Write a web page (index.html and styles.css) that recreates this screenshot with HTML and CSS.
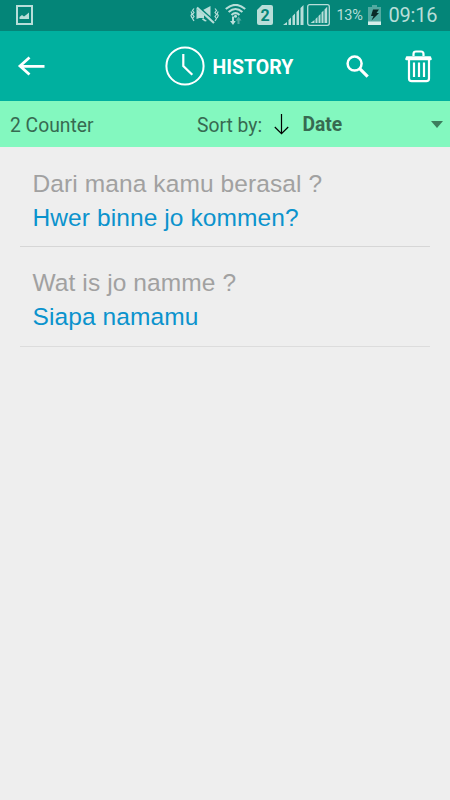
FILE: index.html
```html
<!DOCTYPE html>
<html lang="id">
<head>
<meta charset="utf-8">
<title>History</title>
<link rel="stylesheet" href="styles.css">
</head>
<body>
<div class="status">
  <svg class="shot" width="17" height="20" viewBox="0 0 17 20"><path d="M1 1h15v18H1z" fill="none" stroke="currentColor" stroke-width="2"/><path d="M3.500 14v-2l2.500-2 2 1.500 2-1.500 3-2.500V14z" fill="currentColor"/></svg>
  <svg class="mute" width="29" height="20" viewBox="0 0 29 20"><path d="M6.500 3.500L14 10v3H9.500l-3 1z" fill="currentColor"/><path d="M13 5l7.500-4v14zM13 13l4 3-2 .5-3-2z" fill="currentColor"/><path d="M8.500 1.500l16.500 15" stroke="#048578" stroke-width="1.500"/><path d="M7 2.500l17 15.500" stroke="currentColor" stroke-width="2.200"/><path d="M4 3.500L2.500 5.500 4 7.500 2.500 9.500 4 11.500 2.500 13.500 4 16M1 6.500l1 2-1 2 1 2.500M25 3.500L26.500 5.500 25 7.500 26.500 9.500 25 11.500 26.500 13.500 25 16M28.200 6.500l-1 2 1 2-1 2.500" fill="none" stroke="currentColor" stroke-width="1.200"/></svg>
  <svg class="wifi" width="21" height="22" viewBox="0 0 21 22"><g fill="none" stroke="currentColor" stroke-width="2.100"><path d="M.8 5Q10.500-3.200 20.200 5M3.600 8Q10.500 2 17.400 8M6.500 11Q10.500 7.400 14.500 11"/></g><circle cx="10.500" cy="12.300" r="1.500" fill="currentColor"/><path d="M7 12.500h2v4.500h1.700L8 21l-3-4h2z" fill="currentColor"/><path d="M12.500 20v-3.500h-1.700l2.700-4 3 4h-2V20z" fill="#52aaa1"/></svg>
  <svg class="sim" width="16" height="20" viewBox="0 0 16 20"><path d="M5 0h9q2 0 2 2v16q0 2-2 2H2q-2 0-2-2V5z" fill="currentColor"/><text x="8" y="15.500" text-anchor="middle">2</text></svg>
  <svg class="signal" width="21" height="20" viewBox="0 0 21 20"><path d="M0 20l4-3v3zM5.500 15L8 12.500V20H5.500zM9.500 11L12 8.500V20H9.500zM13.500 7L16 4.500V20h-2.500zM17.500 3L20.500 0v20h-3z" fill="currentColor"/></svg>
  <svg class="boxed" width="23" height="22" viewBox="0 0 23 22"><rect x=".7" y=".7" width="21.600" height="20.600" rx="2" fill="none" stroke="currentColor" stroke-width="1.300"/><path d="M3.500 19l4-3v3zM8.500 15l2-2v6h-2zM11.500 12l2-2v9h-2zM14.500 8.500l2-2V19h-2zM17.500 5.500l2.700-2.700V19h-2.700z" fill="currentColor"/></svg>
  <span class="percent">13%</span>
  <svg class="battery" width="13" height="20" viewBox="0 0 13 20"><path d="M4 0h5v2h4v18H0V2h4z" fill="#52aaa1"/><path d="M0 16.500h13V20H0z" fill="#d4eeea"/><path d="M5 4.500h6L8.500 8H11l-7.500 7.500L5.500 11H3z" fill="#092a27"/></svg>
  <span class="time">09:16</span>
</div>
<header class="bar">
  <svg class="back" width="28" height="20" viewBox="0 0 28 20"><path d="M12.500 1.500L3 10l9.500 8.500M3 10.300h24.500" fill="none" stroke="#fff" stroke-width="2.800"/></svg>
  <svg class="clock" width="40" height="40" viewBox="0 0 40 40"><g fill="none" stroke="#fff"><circle cx="20" cy="20" r="18.600" stroke-width="2"/><path d="M18.300 8v12l9 8.700" stroke-width="2.200"/></g></svg>
  <h1>HISTORY</h1>
  <svg class="search" width="23" height="23" viewBox="0 0 23 23"><g fill="none" stroke="#fff"><circle cx="8.600" cy="8.600" r="7" stroke-width="2.500"/><path d="M13.700 13.700l8 8" stroke-width="3.200"/></g></svg>
  <svg class="trash" width="27" height="33" viewBox="0 0 27 33"><path d="M2 7.500h23M1.500 9h24" fill="none" stroke="#fff" stroke-width="2.600" stroke-linecap="round"/><path d="M8.500 6V4q0-2.500 2.500-2.500h5q2.500 0 2.500 2.500v2M4 9v19.500q0 2.700 2.700 2.700h14.600q2.700 0 2.700-2.700V9" fill="none" stroke="#fff" stroke-width="2.200"/><path d="M9 12.500v14.500M14 12.500v14.500M19 12.500v14.500" stroke="#fff" stroke-width="2.200"/></svg>
</header>
<div class="sort">
  <span class="count">2 Counter</span>
  <span class="label">Sort by:</span>
  <svg class="down" width="15" height="21" viewBox="0 0 15 21"><path d="M7.500 0v19.500M.8 13l6.700 6.700 6.700-6.700" fill="none" stroke="#000" stroke-width="1.200"/></svg>
  <span class="date">Date</span>
  <svg class="caret" width="12" height="7" viewBox="0 0 12 7"><path d="M0 0h12L6 7z" fill="#3d7d5d"/></svg>
</div>
<main>
  <section class="item"><p class="source">Dari mana kamu berasal ?</p><p class="target">Hwer binne jo kommen?</p></section>
  <section class="item"><p class="source">Wat is jo namme ?</p><p class="target">Siapa namamu</p></section>
</main>
</body>
</html>
```

FILE: styles.css
```css
* { box-sizing: border-box; }
body { margin: 0; width: 450px; height: 800px; overflow: hidden; background: #eee; font-family: Roboto, sans-serif; }
svg { display: block; flex: none; }
span, h1, p { white-space: nowrap; }
h1, p { margin: 0; }

.status { display: flex; align-items: flex-start; height: 31px; padding-top: 5px; background: #048578; color: #b8ded9; }
.shot { margin-left: 16px; }
.mute { margin-left: 157px; }
.wifi { margin: -1px 0 0 6px; }
.sim { margin-left: 11px; }
.sim text { font: bold 16px Roboto, sans-serif; fill: #048578; }
.signal { margin-left: 10px; }
.boxed { margin: -1px 0 0 3px; }
.percent { margin-left: 6.500px; width: 27.500px; font-size: 14.500px; line-height: 22px; letter-spacing: -.3px; }
.battery { margin-left: 3.500px; }
.time { margin-left: 8px; font-size: 20px; line-height: 21px; letter-spacing: -.2px; }

.bar { display: flex; align-items: center; height: 70px; background: #00b09f; }
.back { margin-left: 17px; }
.clock { margin-left: 120px; }
h1 { margin: 3px 0 0 7.500px; width: 81.500px; font-size: 19.500px; line-height: 24px; font-weight: 700; color: #fff; }
.search { margin-left: 52px; }
.trash { margin-left: 36px; }

.sort { display: flex; align-items: center; height: 46px; background: #83f8bf; color: #376a51; font-size: 19.300px; }
.count { margin: 3px 0 0 10px; width: 187px; }
.label { width: 76px; margin-top: 3px; }
.down { margin: 1px 0 0 1px; }
.date { width: 128px; margin-left: 13.500px; margin-top: 0; font-weight: 700; }
.caret { margin: 0; }

main { padding: 0 20px; font-family: "Liberation Sans", sans-serif; font-size: 24.500px; letter-spacing: .1px; }
.item { height: 99.500px; padding: 19px 0 0 12.500px; border-bottom: 1px solid #dcdcdc; }
.item:first-child { padding-top: 19.500px; height: 100px; border-color: #d6d6d6; }
.item p { line-height: 34px; }
.source { color: #a1a1a1; }
.target { color: #0b93cd; }
```
